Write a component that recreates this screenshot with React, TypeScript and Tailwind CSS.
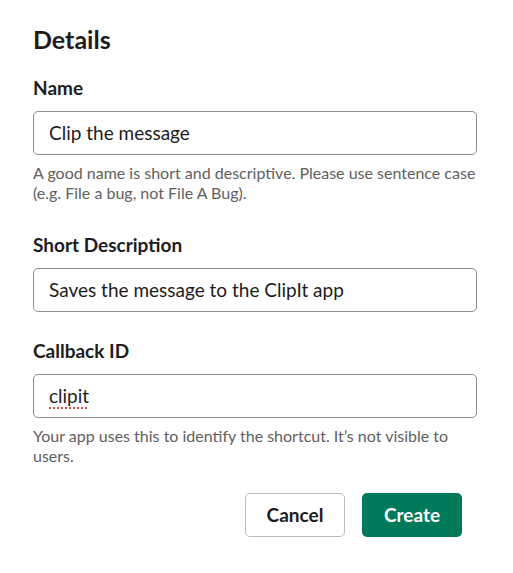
import React from 'react';

const font = { fontFamily: 'Lato, "Noto Sans", sans-serif' };

function Field({
  label,
  value,
  hint,
  spell,
}: {
  label: string;
  value: string;
  hint?: string;
  spell?: boolean;
}) {
  return (
    <div className="flex flex-col">
      <label className="text-[19px] leading-[24px] font-bold text-[#1d1c1d]">{label}</label>
      <div className="mt-[11px] flex h-[44px] items-center rounded-[5px] border border-[#8d8c8d] bg-white pl-[15px]">
        <span
          className={
            spell
              ? 'text-[19px] text-[#1d1c1d] underline decoration-dotted decoration-[#e8464a] decoration-[1.5px] underline-offset-[5px]'
              : 'text-[19px] text-[#1d1c1d]'
          }
        >
          {value}
        </span>
      </div>
      {hint ? <p className="mt-[8px] text-[16px] leading-[20px] text-[#616061]">{hint}</p> : null}
    </div>
  );
}

export default function App() {
  return (
    <div className="min-h-[573px] w-[513px] bg-white pl-[33px] pr-[36px] pt-[24px]" style={font}>
      <h2 className="text-[25px] leading-[30px] font-bold text-[#1d1c1d]">Details</h2>
      <div className="mt-[22px]">
        <Field
          label="Name"
          value="Clip the message"
          hint="A good name is short and descriptive. Please use sentence case (e.g. File a bug, not File A Bug)."
        />
      </div>
      <div className="mt-[30px]">
        <Field label="Short Description" value="Saves the message to the ClipIt app" />
      </div>
      <div className="mt-[27px]">
        <Field
          label="Callback ID"
          value="clipit"
          spell
          hint="Your app uses this to identify the shortcut. It’s not visible to users."
        />
      </div>
      <div className="mt-[27px] mr-[15px] flex justify-end gap-[17px]">
        <button className="h-[44px] w-[100px] rounded-[5px] border border-[#bcbcbc] bg-white text-[19px] font-bold text-[#1d1c1d]">
          Cancel
        </button>
        <button className="h-[44px] w-[100px] rounded-[5px] bg-[#007a5a] text-[19px] font-bold text-white">
          Create
        </button>
      </div>
    </div>
  );
}
